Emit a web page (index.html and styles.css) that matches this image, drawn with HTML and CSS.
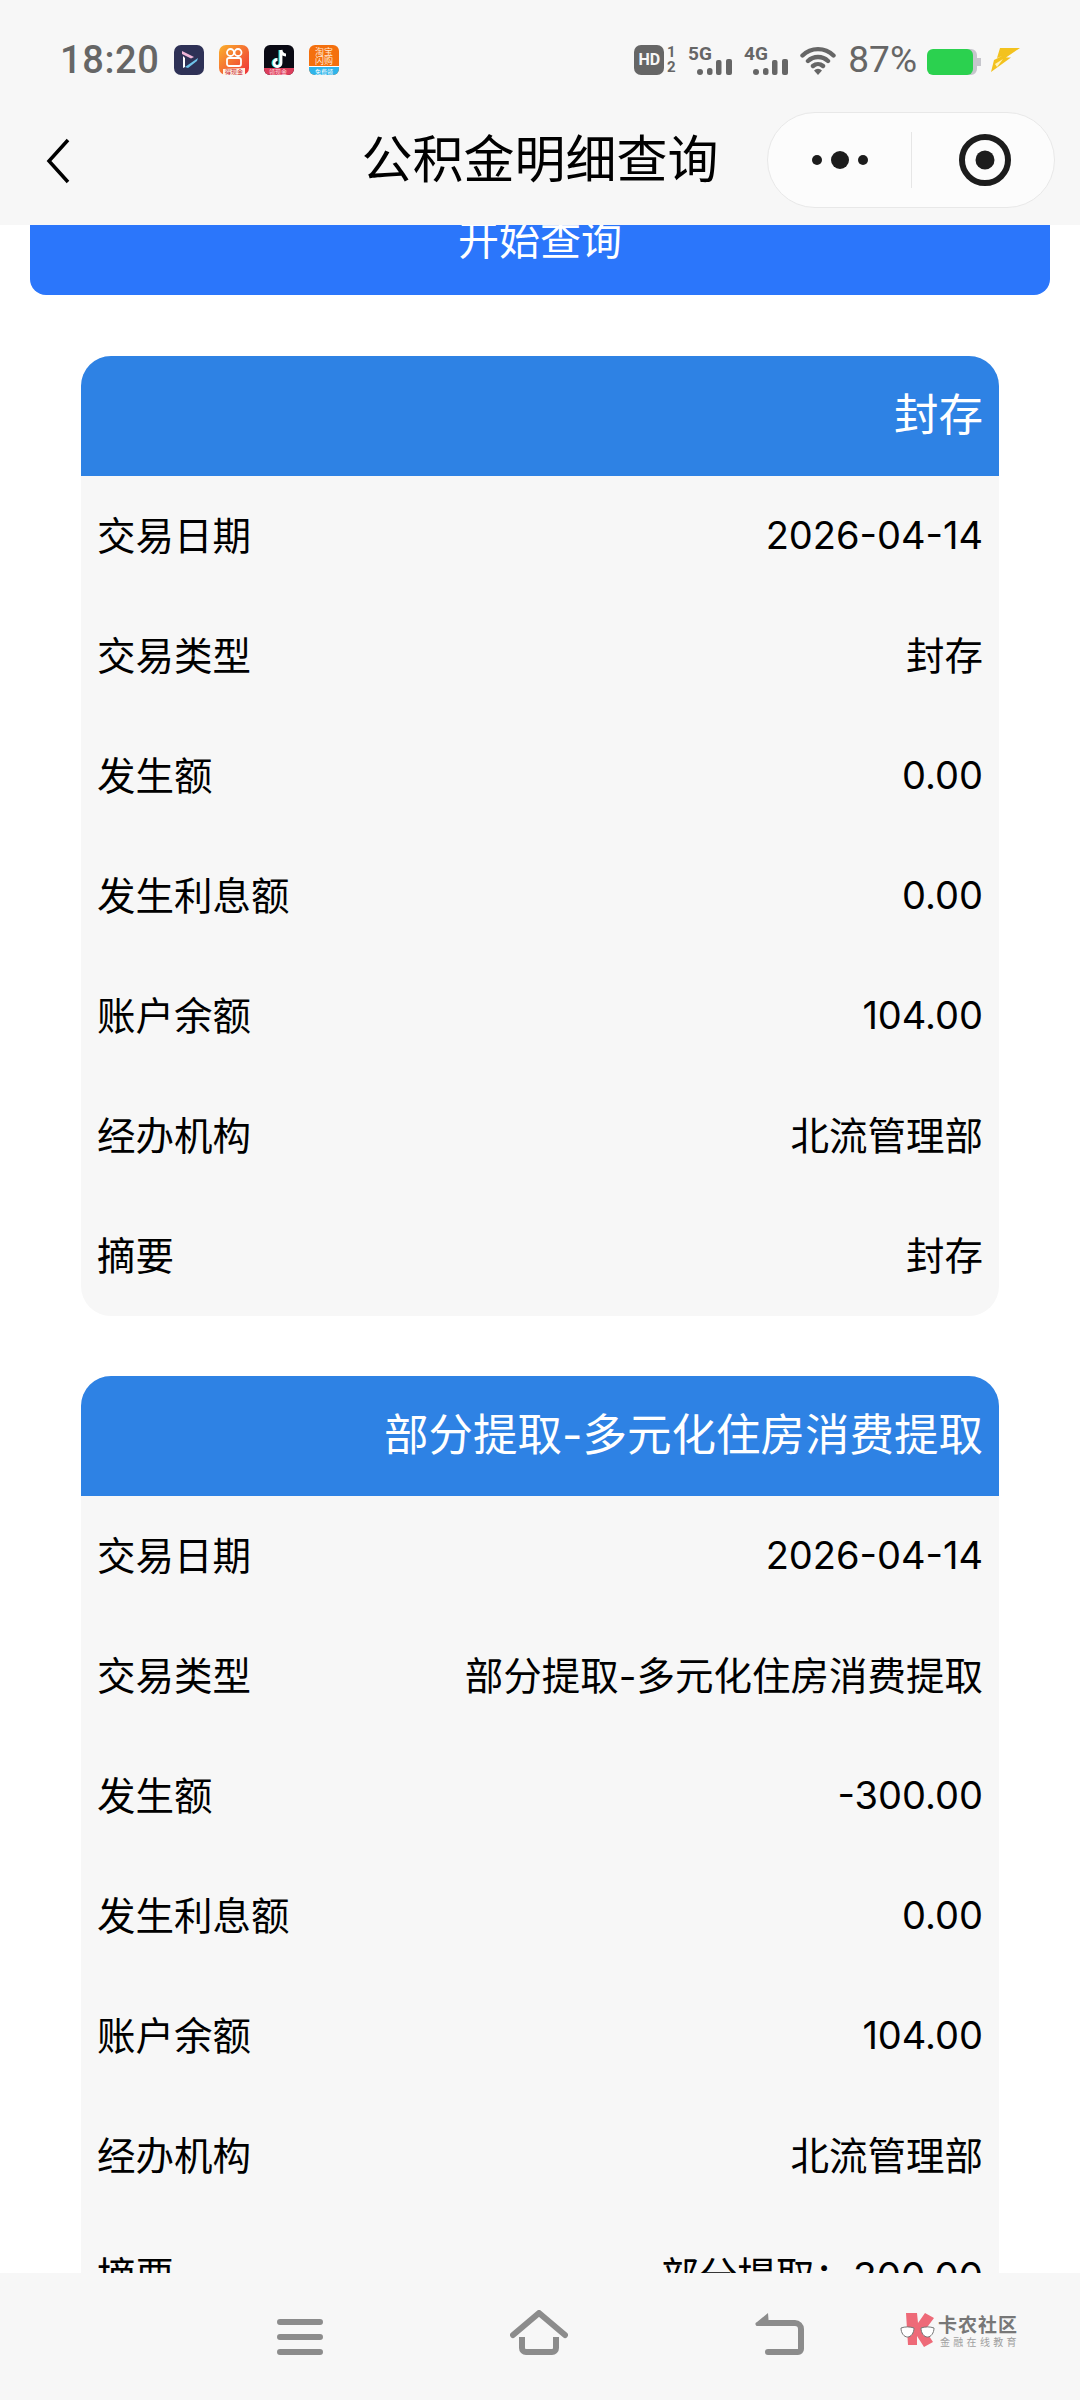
FILE: index.html
```html
<!DOCTYPE html>
<html lang="zh-CN">
<head>
<meta charset="utf-8">
<title>公积金明细查询</title>
<link rel="stylesheet" href="styles.css">
</head>
<body>
<div class="screen">
  <header class="top">
    <div class="status">
      <div class="status-left">
        <span class="time">18:20</span>
        <svg class="app" viewBox="0 0 30 30"><rect width="30" height="30" rx="7" fill="#2e3156"/><path d="M8 6l12 6-3 1.500L8 9z" fill="#f0b6d8"/><path d="M9 11v12l2-1V13z" fill="#fff"/><path d="M11 22l13-9-1 3-9 7z" fill="#6fc4ea"/></svg>
        <svg class="app" viewBox="0 0 30 30"><defs><linearGradient id="ks" x1="0" y1="0" x2="1" y2="1"><stop offset="0" stop-color="#fbb12b"/><stop offset="1" stop-color="#ee2f3a"/></linearGradient></defs><rect width="30" height="30" rx="7" fill="url(#ks)"/><circle cx="11.500" cy="7.500" r="3.500" fill="none" stroke="#fff" stroke-width="1.800"/><circle cx="19" cy="7.500" r="3.500" fill="none" stroke="#fff" stroke-width="1.800"/><rect x="8" y="13" width="14" height="8" rx="2" fill="none" stroke="#fff" stroke-width="1.800"/><path d="M4 24l22-1v7H4z" fill="#fff3e4"/><text x="15" y="29" class="tiny" fill="#c9252f">得现金</text></svg>
        <svg class="app" viewBox="0 0 30 30"><rect width="30" height="30" rx="6" fill="#0a0a14"/><path d="M16 5v13a3.500 3.500 0 1 1-3.500-3.500" fill="none" stroke="#25e2e0" stroke-width="3"/><path d="M17 5v13a3.500 3.500 0 1 1-3.500-3.500M17 5c.5 3 2.500 5 5 5" fill="none" stroke="#fff" stroke-width="2.800"/><path d="M0 23h30v1a6 6 0 0 1-6 6H6a6 6 0 0 1-6-6z" fill="#dc3e5c"/><text x="14" y="29" class="tiny" fill="#ffd9df">领现金</text></svg>
        <svg class="app" viewBox="0 0 30 30"><rect width="30" height="30" rx="6" fill="#f4700e"/><path d="M0 22h30v2a6 6 0 0 1-6 6H6a6 6 0 0 1-6-6z" fill="#2fb4ea"/><path d="M0 21h30v1H0z" fill="#fff"/><text x="15" y="10" class="mini" fill="#ffe9d6">淘宝</text><text x="15" y="19" class="mini" fill="#ffe9d6">闪购</text><text x="15" y="29" class="tiny" fill="#fff">免费领</text></svg>
      </div>
      <div class="status-right">
        <div class="hd"><span class="hd-box">HD</span><span class="hd-sim"><span>1</span><span>2</span></span></div>
        <svg class="net" viewBox="0 0 44 30"><text x="0" y="15" class="net-label">5G</text><circle cx="12" cy="27" r="3" fill="#666"/><rect x="19" y="23" width="5.500" height="7" rx="2.500" fill="#666"/><rect x="28" y="15" width="5.500" height="15" rx="2" fill="#666"/><rect x="38" y="14" width="6" height="16" rx="2" fill="#666"/></svg>
        <svg class="net" viewBox="0 0 44 30"><text x="0" y="15" class="net-label">4G</text><circle cx="12" cy="27" r="3" fill="#666"/><rect x="19" y="23" width="5.500" height="7" rx="2.500" fill="#666"/><rect x="28" y="15" width="5.500" height="15" rx="2" fill="#666"/><rect x="38" y="14" width="6" height="16" rx="2" fill="#666"/></svg>
        <svg class="wifi" viewBox="0 0 36 30"><path d="M2.500 10.500a22 22 0 0 1 31 0M8 16a14.500 14.500 0 0 1 20 0M13 21a7.500 7.500 0 0 1 10 0" fill="none" stroke="#666" stroke-width="4.400" stroke-linecap="round"/><path d="M14 25.500a5.500 5.500 0 0 1 8 0L18 30z" fill="#666"/></svg>
        <span class="pct">87%</span>
        <svg class="batt" viewBox="0 0 54 26"><path d="M40 0h4a6 6 0 0 1 6 6v3h4v8h-4v3a6 6 0 0 1-6 6h-4z" fill="#c6c6cc"/><rect width="46" height="26" rx="6" fill="#2bd14f"/></svg>
        <svg class="bolt" viewBox="0 0 29 24"><path d="M9 0h20L15 9.500h5L0 24l3-12 8-4-5 2z" fill="#f3c21e"/><path d="M4 16l8-5-6 8z" fill="#fff3b8"/></svg>
      </div>
    </div>
    <div class="nav">
      <svg class="back" viewBox="0 0 24 46"><path d="M22 2L3 23l19 21" fill="none" stroke="#000" stroke-width="3.500"/></svg>
      <h1 class="title">公积金明细查询</h1>
      <div class="capsule">
        <div class="dots"><i class="dot"></i><i class="dot dot-big"></i><i class="dot"></i></div>
        <i class="divider"></i>
        <svg class="target" viewBox="0 0 52 52"><circle cx="26" cy="26" r="23" fill="none" stroke="#1c1c1c" stroke-width="6"/><circle cx="26" cy="26" r="9.500" fill="#1c1c1c"/></svg>
      </div>
    </div>
  </header>

  <main class="content">
    <button class="query" type="button">开始查询</button>

    <section class="card">
      <h2 class="card-head">封存</h2>
      <div class="row"><span>交易日期</span><span class="num">2026-04-14</span></div>
      <div class="row"><span>交易类型</span><span>封存</span></div>
      <div class="row"><span>发生额</span><span class="num">0.00</span></div>
      <div class="row"><span>发生利息额</span><span class="num">0.00</span></div>
      <div class="row"><span>账户余额</span><span class="num">104.00</span></div>
      <div class="row"><span>经办机构</span><span>北流管理部</span></div>
      <div class="row"><span>摘要</span><span>封存</span></div>
    </section>

    <section class="card">
      <h2 class="card-head">部分提取-多元化住房消费提取</h2>
      <div class="row"><span>交易日期</span><span class="num">2026-04-14</span></div>
      <div class="row"><span>交易类型</span><span>部分提取-多元化住房消费提取</span></div>
      <div class="row"><span>发生额</span><span class="num">-300.00</span></div>
      <div class="row"><span>发生利息额</span><span class="num">0.00</span></div>
      <div class="row"><span>账户余额</span><span class="num">104.00</span></div>
      <div class="row"><span>经办机构</span><span>北流管理部</span></div>
      <div class="row"><span>摘要</span><span>部分提取：300.00</span></div>
    </section>
  </main>

  <footer class="bottom">
    <svg class="key key-menu" viewBox="0 0 46 46"><path d="M3 12h40M3 27h40M3 42h40" fill="none" stroke="#8c8c8c" stroke-width="6" stroke-linecap="round"/></svg>
    <svg class="key key-home" viewBox="0 0 58 46"><path d="M3 25L29 3l26 22" fill="none" stroke="#8c8c8c" stroke-width="6" stroke-linecap="round" stroke-linejoin="round"/><path d="M12 27v11a4 4 0 0 0 4 4h26a4 4 0 0 0 4-4V27" fill="none" stroke="#8c8c8c" stroke-width="6" stroke-linecap="butt"/></svg>
    <svg class="key key-back" viewBox="0 0 49 46"><path d="M14 13h26a6 6 0 0 1 6 6v20a3 3 0 0 1-3 3H13" fill="none" stroke="#8c8c8c" stroke-width="6" stroke-linecap="round"/><path d="M13 3L2 12a2 2 0 0 0 1 4h11z" fill="#8c8c8c"/></svg>
    <div class="mark">
      <svg class="mark-logo" viewBox="0 0 35 34"><path d="M6 0h11l1 10 7-10 9 5-9 12 8 12-9 5-7-11v9H8z" fill="#ee6a78"/><path d="M1 15c4-1.500 9-1.500 13 0 0 5-3 9-6.500 9S1 20 1 15zM21 15c4-1.500 9-1.500 13 0 0 5-3 9-6.500 9S21 20 21 15z" fill="#fff" stroke="#777" stroke-width="1"/></svg>
      <div class="mark-text"><span class="mark-name">卡农社区</span><span class="mark-sub">金融在线教育</span></div>
    </div>
  </footer>
</div>
</body>
</html>
```

FILE: styles.css
```css
* { box-sizing: border-box; }
html, body { margin: 0; padding: 0; background: #fff; }
body { font-family: Inter, "Noto Sans CJK SC", "Noto Sans", sans-serif; }
.screen { width: 1080px; height: 2400px; display: flex; flex-direction: column; overflow: hidden; }

.top { flex: none; height: 225px; background: #f7f7f7; position: relative; z-index: 2; }
.status { height: 112px; padding: 45px 60px 0 60px; display: flex; justify-content: space-between; align-items: flex-start; }
.status-left { display: flex; align-items: center; height: 30px; gap: 15px; }
.time { font-family: Roboto, sans-serif; font-weight: 500; font-size: 38px; line-height: 30px; letter-spacing: .6px; color: #666; width: 99px; }
.app { width: 30px; height: 30px; display: block; }
.tiny { font-size: 6px; text-anchor: middle; font-family: "Noto Sans CJK SC", sans-serif; }
.mini { font-size: 9px; text-anchor: middle; font-family: "Noto Sans CJK SC", sans-serif; }
.status-right { display: flex; align-items: center; height: 30px; gap: 12px; }
.hd { display: flex; align-items: center; gap: 2px; }
.hd-box { width: 30px; height: 30px; border-radius: 7px; background: #666; color: #f7f7f7; font: 700 16px/30px Roboto, sans-serif; text-align: center; }
.hd-sim { display: flex; flex-direction: column; font: 700 15px/15px Roboto, sans-serif; color: #666; text-align: center; width: 10px; }
.net { width: 44px; height: 30px; display: block; }
.net-label { font: 700 19px Roboto, sans-serif; fill: #666; }
.wifi { width: 36px; height: 30px; display: block; }
.pct { font-family: Roboto, sans-serif; font-size: 37px; line-height: 30px; color: #666; margin-right: -2px; }
.batt { width: 54px; height: 26px; display: block; margin-top: 4px; }
.bolt { width: 29px; height: 24px; display: block; margin-left: -2px; }

.nav { height: 113px; position: relative; display: flex; align-items: flex-start; justify-content: center; }
.back { position: absolute; left: 46px; top: 26px; width: 24px; height: 46px; }
.title { margin: -4px 0 0; font-family: "Noto Sans CJK SC", sans-serif; font-size: 51px; font-weight: 400; color: #000; line-height: 96px; }
.capsule { position: absolute; left: 767px; top: 0; width: 288px; height: 96px; border: 1.500px solid #e8e8e8; border-radius: 48px; background: #fcfcfc; display: flex; align-items: center; }
.dots { width: 143px; display: flex; align-items: center; justify-content: center; gap: 9px; }
.dot { width: 10px; height: 10px; border-radius: 50%; background: #1c1c1c; }
.dot-big { width: 18px; height: 18px; }
.divider { width: 1px; height: 56px; background: #e6e6e6; }
.target { width: 52px; height: 52px; margin-left: 47px; display: block; }

.content { flex: 1; min-height: 0; overflow: hidden; padding: 0 30px; display: block; }
.query { display: block; width: 1020px; height: 114px; margin: -44px 0 61px 0; border: 0; border-radius: 16px; background: #2b76fb; color: #fff; font-family: "Noto Sans CJK SC", sans-serif; font-size: 41px; line-height: 110px; padding: 0 0 2px; }

.card { width: 918px; margin: 0 0 60px 51px; background: #f7f7f7; border-radius: 30px; overflow: hidden; }
.card-head { margin: 0; height: 120px; line-height: 118px; background: #2e82e4; color: #fff; font-size: 44.500px; font-weight: 400; text-align: right; padding: 0 16px; }
.row { height: 120px; padding: 0 16px 6px; display: flex; justify-content: space-between; align-items: center; font-size: 38.500px; color: #000; }
.num { font-size: 38px; padding-top: 3px; }

.bottom { flex: none; height: 127px; background: #f7f7f7; display: flex; align-items: flex-start; position: relative; z-index: 2; padding: 37px 0 0 277px; gap: 187px; }
.key { height: 46px; display: block; flex: none; }
.key-menu { width: 46px; }
.key-home { width: 58px; }
.key-back { width: 49px; }
.mark { position: absolute; left: 900px; top: 40px; display: flex; gap: 3px; align-items: flex-start; }
.mark-logo { width: 35px; height: 34px; display: block; }
.mark-text { display: flex; flex-direction: column; font-family: "Noto Sans CJK SC", sans-serif; }
.mark-name { font-size: 19px; font-weight: 700; line-height: 22px; letter-spacing: 1px; color: #777; }
.mark-sub { font-size: 10px; line-height: 14px; letter-spacing: 3.300px; color: #a0a0a0; margin-left: 2px; }
```
